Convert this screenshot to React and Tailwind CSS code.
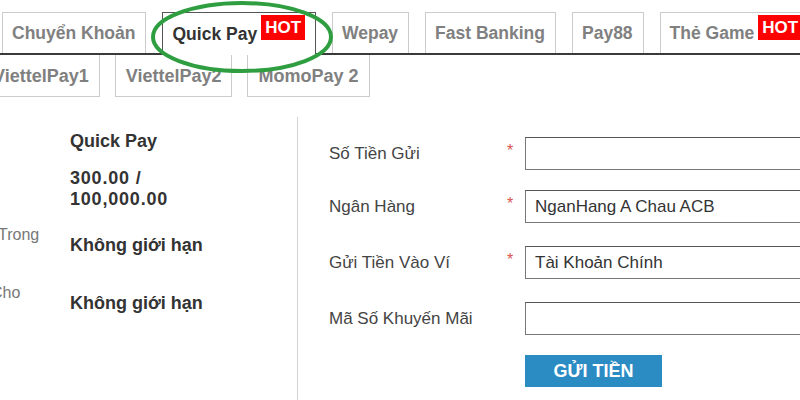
import React from 'react';

const font = { fontFamily: '"Liberation Sans", Arial, sans-serif' };

function Hot() {
  return (
    <span className="self-start mt-[2px] ml-[4px] bg-[#ff0000] text-white font-bold text-[17px] leading-[25px] px-[4px]">
      HOT
    </span>
  );
}

function Tab({ label, active, hot }) {
  return (
    <div
      className={`shrink-0 flex items-center h-[41px] pl-[9px] pr-[10px] bg-white border border-b-0 ${
        active
          ? 'border-[#555] text-[#333] h-[43px] -mb-[2px] relative z-10'
          : 'border-[#ccc] text-[#808080]'
      }`}
    >
      <span className="font-bold text-[17.5px] leading-none mt-[1px]">{label}</span>
      {hot && <Hot />}
    </div>
  );
}

function SubTab({ label }) {
  return (
    <div className="shrink-0 flex items-center h-[42px] px-[10px] bg-white border border-t-0 border-[#ccc] text-[#808080]">
      <span className="font-bold text-[18px] leading-none">{label}</span>
    </div>
  );
}

function Field({ label, required, value, className }) {
  return (
    <div className={`flex items-center ${className}`}>
      <span className="w-[178px] shrink-0 text-[17px] text-[#444]">{label}</span>
      <span className="w-[18px] shrink-0 self-start mt-[2px] text-[16px] text-[#d9534f]">
        {required ? '*' : ''}
      </span>
      <div className="w-[300px] shrink-0 h-[33px] border border-[#777] border-t-[#555] flex items-center pl-[9px] text-[17px] text-[#333]">
        {value}
      </div>
    </div>
  );
}

export default function App() {
  return (
    <div className="relative w-[800px] h-[400px] overflow-hidden bg-white" style={font}>
      <div className="pt-[12px]">
        <div className="flex items-end gap-[16px] pl-[2px] border-b-2 border-[#3a3a3a]">
          <Tab label="Chuyển Khoản" />
          <Tab label="Quick Pay" active hot />
          <Tab label="Wepay" />
          <Tab label="Fast Banking" />
          <Tab label="Pay88" />
          <Tab label="Thẻ Game" hot />
        </div>
        <div className="flex gap-[15px] -ml-[18px]">
          <SubTab label="ViettelPay1" />
          <SubTab label="ViettelPay2" />
          <SubTab label="MomoPay 2" />
        </div>
      </div>

      <div className="flex mt-[20px] h-[300px]">
        <div className="w-[298px] shrink-0 border-r border-[#d4d4d4] text-[18px]">
          <div className="flex mt-[14px]">
            <span className="w-[70px] shrink-0" />
            <span className="font-bold text-[#333] leading-[21px]">Quick Pay</span>
          </div>
          <div className="flex mt-[16px]">
            <span className="w-[70px] shrink-0" />
            <span className="font-bold text-[#333] leading-[21px] tracking-[0.8px]">
              300.00 /<br />100,000.00
            </span>
          </div>
          <div className="flex mt-[15px]">
            <span className="w-[70px] shrink-0 -ml-[2px] text-[16px] text-[#777] leading-[20px]">Trong</span>
            <span className="ml-[2px] mt-[10px] font-bold text-[#333] leading-[21px]">Không giới hạn</span>
          </div>
          <div className="flex mt-[27px]">
            <span className="w-[70px] shrink-0 -ml-[9px] text-[16px] text-[#777] leading-[20px]">Cho</span>
            <span className="ml-[9px] mt-[10px] font-bold text-[#333] leading-[21px]">Không giới hạn</span>
          </div>
        </div>

        <div className="pl-[31px] pt-[20px]">
          <Field label="Số Tiền Gửi" required value="" />
          <Field label="Ngân Hàng" required value="NganHang A Chau ACB" className="mt-[20px]" />
          <Field label="Gửi Tiền Vào Ví" required value="Tài Khoản Chính" className="mt-[23px]" />
          <Field label="Mã Số Khuyến Mãi" value="" className="mt-[23px]" />
          <div className="flex mt-[20px]">
            <span className="w-[196px] shrink-0" />
            <button className="w-[137px] h-[32px] bg-[#2b8cc4] text-white font-bold text-[18px] leading-none">
              GỬI TIỀN
            </button>
          </div>
        </div>
      </div>

      <svg className="absolute left-[150px] top-0 z-20" width="184" height="76" viewBox="0 0 184 76">
        <ellipse cx="92" cy="37" rx="89" ry="34" fill="none" stroke="#2f9e41" strokeWidth="4" />
      </svg>
    </div>
  );
}
